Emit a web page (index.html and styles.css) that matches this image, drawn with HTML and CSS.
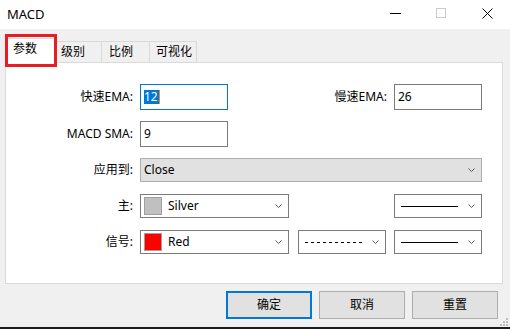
FILE: index.html
```html
<!DOCTYPE html>
<html>
<head>
<meta charset="utf-8">
<link rel="stylesheet" href="styles.css">
</head>
<body>
<div class="window">
  <header class="titlebar">
    <span class="title">MACD</span>
    <div class="controls">
      <div class="ctrl"><svg width="11" height="11" viewBox="0 0 11 11"><line x1="0" y1="5.5" x2="11" y2="5.5" stroke="#000" stroke-width="1"/></svg></div>
      <div class="ctrl"><svg width="11" height="11" viewBox="0 0 11 11"><rect x="0.5" y="0.5" width="9" height="9" fill="none" stroke="#cccccc" stroke-width="1"/></svg></div>
      <div class="ctrl"><svg width="11" height="11" viewBox="0 0 11 11"><path d="M0.5 0.5 L10.5 10.5 M10.5 0.5 L0.5 10.5" stroke="#000" stroke-width="1" fill="none"/></svg></div>
    </div>
  </header>
  <div class="client">
    <div class="tabs">
      <div class="tab active">参数</div>
      <div class="tab t2">级别</div>
      <div class="tab t3">比例</div>
      <div class="tab t4">可视化</div>
    </div>
    <div class="panel">
      <div class="row tall">
        <span class="lbl">快速EMA:</span>
        <div class="input focus"><span class="sel">12</span><span class="caret"></span></div>
        <span class="lbl2">慢速EMA:</span>
        <div class="input">26</div>
      </div>
      <div class="row tall">
        <span class="lbl">MACD SMA:</span>
        <div class="input">9</div>
      </div>
      <div class="row">
        <span class="lbl">应用到:</span>
        <div class="combo grey wide"><span class="ctext">Close</span><svg class="chev" width="7" height="4" viewBox="0 0 7 4"><polyline points="0.5,0.5 3.5,3.5 6.5,0.5" fill="none" stroke="#555" stroke-width="1"/></svg></div>
      </div>
      <div class="row gap12">
        <span class="lbl">主:</span>
        <div class="combo color"><span class="swatch silver"></span><span class="ctext">Silver</span><svg class="chev" width="7" height="4" viewBox="0 0 7 4"><polyline points="0.5,0.5 3.5,3.5 6.5,0.5" fill="none" stroke="#555" stroke-width="1"/></svg></div>
        <div class="combo line push"><span class="solid"></span><svg class="chev" width="7" height="4" viewBox="0 0 7 4"><polyline points="0.5,0.5 3.5,3.5 6.5,0.5" fill="none" stroke="#555" stroke-width="1"/></svg></div>
      </div>
      <div class="row gap12">
        <span class="lbl">信号:</span>
        <div class="combo color"><span class="swatch red"></span><span class="ctext">Red</span><svg class="chev" width="7" height="4" viewBox="0 0 7 4"><polyline points="0.5,0.5 3.5,3.5 6.5,0.5" fill="none" stroke="#555" stroke-width="1"/></svg></div>
        <div class="combo line dash"><svg class="stroke" width="57" height="1" viewBox="0 0 57 1"><line x1="0" y1="0.5" x2="57" y2="0.5" stroke="#000" stroke-width="1" stroke-dasharray="3 3"/></svg><svg class="chev" width="7" height="4" viewBox="0 0 7 4"><polyline points="0.5,0.5 3.5,3.5 6.5,0.5" fill="none" stroke="#555" stroke-width="1"/></svg></div>
        <div class="combo line next"><span class="solid"></span><svg class="chev" width="7" height="4" viewBox="0 0 7 4"><polyline points="0.5,0.5 3.5,3.5 6.5,0.5" fill="none" stroke="#555" stroke-width="1"/></svg></div>
      </div>
    </div>
    <div class="buttons">
      <button class="btn primary">确定</button>
      <button class="btn">取消</button>
      <button class="btn">重置</button>
    </div>
    <svg class="grip" width="8" height="8" viewBox="0 0 8 8">
      <rect x="6" y="0" width="2" height="2" fill="#bdbdbd"/>
      <rect x="3" y="3" width="2" height="2" fill="#bdbdbd"/>
      <rect x="6" y="3" width="2" height="2" fill="#bdbdbd"/>
      <rect x="0" y="6" width="2" height="2" fill="#bdbdbd"/>
      <rect x="3" y="6" width="2" height="2" fill="#bdbdbd"/>
      <rect x="6" y="6" width="2" height="2" fill="#bdbdbd"/>
    </svg>
  </div>
  <div class="edge"></div>
  <div class="highlight"></div>
</div>
</body>
</html>
```

FILE: styles.css
```css
* { box-sizing: border-box; }
html, body { margin: 0; padding: 0; }
body {
  width: 510px;
  height: 329px;
  overflow: hidden;
  font-family: "Noto Sans", "Noto Sans CJK SC", sans-serif;
  font-size: 12px;
  color: #000;
}
.window {
  position: relative;
  width: 510px;
  height: 329px;
  display: flex;
  flex-direction: column;
  background: #f0f0f0;
}
.titlebar {
  flex: none;
  height: 29px;
  background: #fff;
  display: flex;
  align-items: center;
}
.title {
  margin-left: 7px;
  font-size: 13px;
  line-height: 16px;
  margin-top: -1px;
}
.controls {
  margin-left: auto;
  display: flex;
  height: 29px;
}
.ctrl {
  width: 46px;
  height: 29px;
  display: flex;
  justify-content: center;
  padding-top: 8px;
}
.ctrl svg { display: block; }
.client {
  flex: 1;
  position: relative;
  display: flex;
  flex-direction: column;
  padding: 12px 7px 0 5px;
}
.tabs {
  display: flex;
  align-items: flex-end;
  height: 21px;
  padding-left: 2px;
  position: relative;
  z-index: 1;
}
.tab {
  height: 21px;
  border: 1px solid #d9d9d9;
  border-bottom: none;
  background: #f0f0f0;
  padding-left: 5px;
  line-height: 20px;
  white-space: nowrap;
}
.tab.active {
  width: 48px;
  height: 25px;
  margin-bottom: -1px;
  background: #fff;
  line-height: 19px;
}
.tab.t2 { width: 47px; }
.tab.t3 { width: 49px; margin-left: -1px; padding-left: 7px; }
.tab.t4 { width: 48px; margin-left: -1px; padding-left: 6px; }
.panel {
  height: 222px;
  background: #fff;
  border: 1px solid #d9d9d9;
  padding: 21px 20px 0 0;
  display: flex;
  flex-direction: column;
}
.row {
  display: flex;
  align-items: center;
  height: 24px;
  margin-top: 11px;
}
.row:first-child { margin-top: 0; }
.row.tall { height: 26px; }
.row.gap12 { margin-top: 12px; }
.lbl {
  flex: none;
  width: 127px;
  margin-right: 7px;
  text-align: right;
  line-height: 16px;
}
.lbl2 {
  flex: 1;
  text-align: right;
  margin-right: 7px;
  line-height: 16px;
}
.input {
  flex: none;
  width: 88px;
  height: 26px;
  border: 1px solid #7a7a7a;
  background: #fff;
  padding-left: 3px;
  display: flex;
  align-items: center;
  line-height: 16px;
}
.input.focus { border-color: #0078d7; }
.sel {
  background: #0078d7;
  color: #fff;
  line-height: 14px;
  padding: 0 1px 0 0;
}
.caret {
  width: 1px;
  height: 14px;
  background: #f08a24;
}
.combo {
  flex: none;
  height: 24px;
  border: 1px solid #7a7a7a;
  background: #fff;
  display: flex;
  align-items: center;
  padding: 0 6px 0 3px;
  line-height: 16px;
}
.combo.grey {
  background: #e1e1e1;
  border-color: #adadad;
}
.combo.wide { width: 342px; }
.combo.color { width: 149px; }
.combo.line { width: 88px; padding-left: 6px; }
.combo.push { margin-left: auto; }
.combo.dash { margin-left: 9px; }
.combo.next { margin-left: 8px; }
.ctext { flex: 1; }
.chev { display: block; flex: none; margin-left: auto; }
.stroke { display: block; flex: none; }
.solid {
  display: block;
  flex: none;
  width: 57px;
  height: 1px;
  background: #000;
}
.swatch {
  flex: none;
  width: 18px;
  height: 18px;
  border: 1px solid #a0a0a0;
  margin-right: 6px;
}
.swatch.silver { background: #c0c0c0; }
.swatch.red { background: #ff0000; }
.buttons {
  display: flex;
  justify-content: flex-end;
  gap: 7px;
  margin-top: 7px;
  padding-right: 5px;
}
.btn {
  width: 86px;
  height: 28px;
  border: 1px solid #adadad;
  background: #e1e1e1;
  font-family: inherit;
  font-size: 12px;
  color: #000;
  padding: 0;
  line-height: 16px;
}
.btn.primary { border: 2px solid #0078d7; }
.grip {
  position: absolute;
  right: 2px;
  bottom: 1px;
}
.edge {
  flex: none;
  height: 2px;
  background: #1c1c1c;
}
.highlight {
  position: absolute;
  left: 5px;
  top: 34px;
  width: 52px;
  height: 33px;
  border: 3px solid #e81c24;
  z-index: 5;
}
```
